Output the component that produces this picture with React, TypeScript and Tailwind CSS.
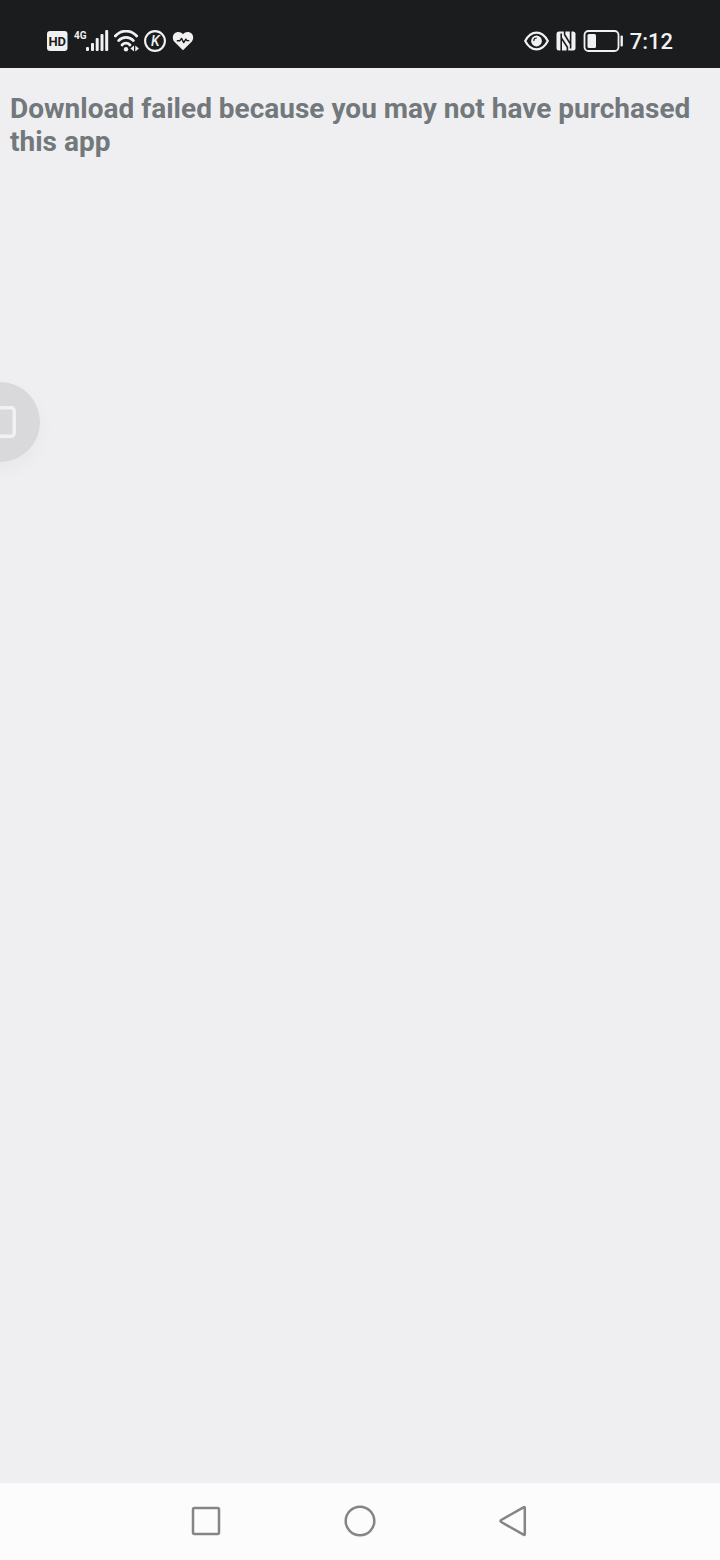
function StatusBar() {
    return (
        <header className="flex h-[68px] items-center justify-between bg-[#1b1c1e] px-[47px] pt-[14px] text-[#f1f1f2]">
            <div className="flex items-center gap-[5px]">
                <svg width="21" height="22" viewBox="0 0 21 22" role="img" aria-label="HD voice">
                    <rect x="0" y="1" width="20.5" height="20" rx="3" fill="currentColor" />
                    <text x="10.2" y="15.5" textAnchor="middle" fontFamily="Roboto, sans-serif" fontSize="13" fontWeight="700" fill="#1b1c1e">HD</text>
                </svg>
                <svg width="36" height="22" viewBox="0 0 36 22" fill="currentColor" role="img" aria-label="Mobile signal">
                    <text x="1" y="9" fontFamily="Roboto, sans-serif" fontSize="10" fontWeight="700">4G</text>
                    <rect x="13" y="17" width="3" height="4" rx="1" />
                    <rect x="18" y="13" width="3" height="8" rx="1" />
                    <rect x="22.7" y="8" width="3" height="13" rx="1" />
                    <rect x="27.5" y="4" width="3" height="17" rx="1" />
                    <rect x="32.2" y="0" width="3" height="21" rx="1" />
                </svg>
                <svg width="25" height="22" viewBox="0 0 25 22" fill="none" stroke="currentColor" role="img" aria-label="Wi-Fi">
                    <path d="M1.3 6C7.4-.4 16.6-.4 22.7 6" strokeWidth="2.8" strokeLinecap="round" />
                    <path d="M4.6 10.6C8.7 6.2 15.3 6.2 19.4 10.6" strokeWidth="2.8" strokeLinecap="round" />
                    <path d="M8 15C10.2 12.6 13.8 12.6 16 15" strokeWidth="2.8" strokeLinecap="round" />
                    <circle cx="12" cy="19.2" r="2.2" fill="currentColor" stroke="none" />
                    <path d="M20 15.4v6l-3.6-3zM21.3 15.4v6l3.6-3z" fill="currentColor" stroke="none" />
                </svg>
                <svg width="23" height="22" viewBox="0 0 23 22" role="img" aria-label="K">
                    <circle cx="11" cy="11" r="9.9" fill="none" stroke="currentColor" strokeWidth="2.1" />
                    <text x="11.2" y="16" textAnchor="middle" fontFamily="Roboto, sans-serif" fontSize="14" fontWeight="500" fontStyle="italic" fill="currentColor">K</text>
                </svg>
                <svg width="22" height="20" viewBox="0 0 22 20" role="img" aria-label="Health">
                    <path d="M11 19.2 2.6 11C.2 8.5.3 4.6 2.5 2.5 4.9.2 8.8.5 11 3.3 13.2.5 17.1.2 19.5 2.5 21.7 4.6 21.8 8.5 19.4 11z" fill="currentColor" />
                    <path d="M4.8 9.8h3l1.7-2.4 2.2 4.2 2.2-3.4 1 1.4h2.4" fill="none" stroke="#1b1c1e" strokeWidth="1.4" strokeLinejoin="round" />
                </svg>
            </div>

            <div className="flex items-center gap-[7px]">
                <svg width="25" height="20" viewBox="0 0 25 20" fill="none" stroke="currentColor" role="img" aria-label="Eye comfort">
                    <path d="M1.2 10C4 4.6 8 1.6 12.5 1.6S21 4.6 23.8 10C21 15.4 17 18.4 12.5 18.4S4 15.4 1.2 10z" strokeWidth="2.2" strokeLinejoin="round" />
                    <circle cx="12.5" cy="10" r="5.4" fill="currentColor" stroke="none" />
                    <path d="M9.8 9.6a2.6 2.6 0 0 1 2.6-2.6" stroke="#1b1c1e" strokeWidth="1.2" strokeLinecap="round" />
                </svg>
                <svg width="20" height="20" viewBox="0 0 20 20" role="img" aria-label="NFC">
                    <rect x="0.5" y="0.5" width="19" height="19" rx="2.5" fill="currentColor" />
                    <path d="M5.2 20V2.5M5.2 6.8l6.2 9.4V20M14.6 0v17.5M14.6 13.2L8.6 3.8V0" fill="none" stroke="#1b1c1e" strokeWidth="1.6" />
                </svg>
                <svg width="40" height="22" viewBox="0 0 40 22" role="img" aria-label="Battery low">
                    <rect x="1.5" y="1" width="34" height="20" rx="4" fill="none" stroke="currentColor" strokeWidth="1.8" />
                    <rect x="4.5" y="4" width="8.5" height="14" rx="1.5" fill="currentColor" />
                    <rect x="37.5" y="5.5" width="2.4" height="11" rx="1" fill="currentColor" />
                </svg>
                <time className="pt-[2px] text-[22px] leading-6 font-medium">7:12</time>
            </div>
        </header>
    )
}

function FloatingButton() {
    return (
        <button
            type="button"
            aria-label="Floating dock"
            className="absolute top-[382px] -left-10 flex size-20 items-center justify-center rounded-full bg-[#d9d9db] shadow-[0_8px_20px_rgba(0,0,0,0.03)]"
        >
            <svg width="32" height="32" viewBox="0 0 32 32" fill="none" stroke="#f1f1f3" strokeWidth="3.5">
                <rect x="1.8" y="1.8" width="28.4" height="28.4" rx="3" />
            </svg>
        </button>
    )
}

function NavigationBar() {
    return (
        <nav className="grid h-[77px] grid-cols-3 bg-[#fcfcfc] px-[18%] pb-px text-[#858585]">
            <button type="button" aria-label="Recent apps" className="flex items-center justify-center">
                <svg width="30" height="30" viewBox="0 0 30 30" fill="none" stroke="currentColor" strokeWidth="2.5">
                    <rect x="2" y="2" width="26" height="26" rx="1.5" />
                </svg>
            </button>
            <button type="button" aria-label="Home" className="flex items-center justify-center">
                <svg width="32" height="32" viewBox="0 0 32 32" fill="none" stroke="currentColor" strokeWidth="2.5">
                    <circle cx="16" cy="16" r="14.3" />
                </svg>
            </button>
            <button type="button" aria-label="Back" className="flex items-center justify-center">
                <svg width="30" height="32" viewBox="0 0 30 32" fill="none" stroke="currentColor" strokeWidth="2.5" strokeLinejoin="round">
                    <path d="M24.5 2.3Q25.8 1.6 25.8 3V29Q25.8 30.4 24.5 29.7L2.2 17Q.8 16 2.2 15z" />
                </svg>
            </button>
        </nav>
    )
}

export default function App() {
    return (
        <div className="relative flex min-h-screen flex-col overflow-hidden bg-[#efeff1] font-[Roboto,sans-serif]">
            <StatusBar />
            <main className="flex-1 px-[10px] pt-6">
                <h1 className="text-[28px] leading-[33px] font-bold text-[#72787c]">
                    Download failed because you may not have purchased this app
                </h1>
            </main>
            <FloatingButton />
            <NavigationBar />
        </div>
    )
}
